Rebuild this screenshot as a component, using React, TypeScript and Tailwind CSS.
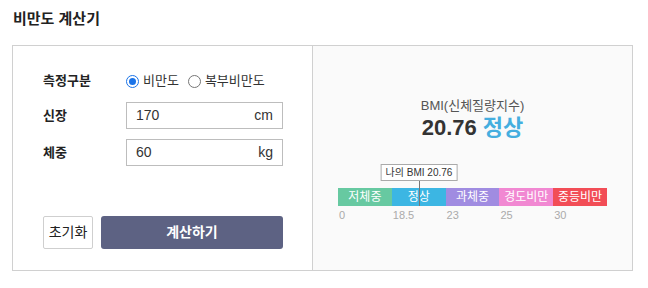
import React, { useState } from 'react';

const font = { fontFamily: '"Liberation Sans", "Noto Sans CJK KR", sans-serif' };

const segments = [
  { label: '저체중', from: '0', color: 'bg-[#67c9a1]' },
  { label: '정상', from: '18.5', color: 'bg-[#3cb6e3]' },
  { label: '과체중', from: '23', color: 'bg-[#a08ce1]' },
  { label: '경도비만', from: '25', color: 'bg-[#f188d2]' },
  { label: '중등비만', from: '30', color: 'bg-[#f24d56]' },
];

const Radio: React.FC<{ checked: boolean; label: string; onClick: () => void }> = ({ checked, label, onClick }) => (
  <label className="flex items-center cursor-pointer" onClick={onClick}>
    <span
      className={`w-[13px] h-[13px] rounded-full border flex items-center justify-center ${
        checked ? 'border-[#1a73e8]' : 'border-[#767676]'
      }`}
    >
      {checked && <span className="w-[7px] h-[7px] rounded-full bg-[#1a73e8]" />}
    </span>
    <span className="ml-[4px] text-[13px] text-[#333]">{label}</span>
  </label>
);

const Field: React.FC<{ label: string; value: string; unit: string }> = ({ label, value, unit }) => (
  <div className="flex items-center">
    <div className="w-[83px] text-[13px] font-bold text-[#222]">{label}</div>
    <div className="w-[157px] h-[27px] border border-[#bdbdbd] flex items-center justify-between px-[9px] text-[14px] text-[#333]">
      <span>{value}</span>
      <span>{unit}</span>
    </div>
  </div>
);

export default function App() {
  const [mode, setMode] = useState<'bmi' | 'waist'>('bmi');

  return (
    <div className="w-[648px] h-[288px] bg-white pt-[9px]" style={font}>
      <h1 className="ml-[13px] text-[15px] leading-[20px] font-bold text-[#222]">비만도 계산기</h1>

      <div className="ml-[12px] mt-[16px] w-[621px] h-[226px] border border-[#d0d0d0] flex">
        {/* input side */}
        <div className="w-[300px] pl-[30px] pt-[25px] border-r border-[#d0d0d0]">
          <div className="flex items-center h-[20px]">
            <div className="w-[83px] text-[13px] font-bold text-[#222]">측정구분</div>
            <div className="flex items-center gap-[9px]">
              <Radio checked={mode === 'bmi'} label="비만도" onClick={() => setMode('bmi')} />
              <Radio checked={mode === 'waist'} label="복부비만도" onClick={() => setMode('waist')} />
            </div>
          </div>
          <div className="mt-[11px] flex flex-col gap-[10px]">
            <Field label="신장" value="170" unit="cm" />
            <Field label="체중" value="60" unit="kg" />
          </div>
          <div className="mt-[50px] flex gap-[8px]">
            <button className="w-[50px] h-[33px] border border-[#cfcfcf] rounded-[2px] bg-white text-[14px] text-[#222]">
              초기화
            </button>
            <button className="w-[182px] h-[33px] rounded-[3px] bg-[#5d6283] text-white text-[14px] font-bold">
              계산하기
            </button>
          </div>
        </div>

        {/* result side */}
        <div className="flex-1 bg-[#fafafa] flex flex-col items-center pt-[51px]">
          <div className="text-[13px] leading-[18px] text-[#555]">BMI(신체질량지수)</div>
          <div className="text-[22px] leading-[26px] font-bold text-[#333]">
            20.76 <span className="text-[#45aedf]">정상</span>
          </div>

          <div className="relative w-[269px] mt-[23px]">
            <div className="absolute left-[81px] top-0 -translate-x-1/2 h-[17px] px-[4px] border border-[#aaa] bg-white text-[10px] leading-[15px] text-[#333] whitespace-nowrap">
              나의 BMI 20.76
            </div>
            <div className="absolute left-[81px] top-[17px] w-px h-[25px] bg-[#777] z-10" />
            <div className="pt-[24px] flex">
              {segments.map((s) => (
                <div
                  key={s.label}
                  className={`flex-1 h-[18px] ${s.color} text-white text-[12px] leading-[18px] text-center`}
                >
                  {s.label}
                </div>
              ))}
            </div>
            <div className="flex mt-[2px]">
              {segments.map((s) => (
                <div key={s.from} className="flex-1 text-[11px] leading-[14px] text-[#aaa] pl-[1px]">
                  {s.from}
                </div>
              ))}
            </div>
          </div>
        </div>
      </div>
    </div>
  );
}
